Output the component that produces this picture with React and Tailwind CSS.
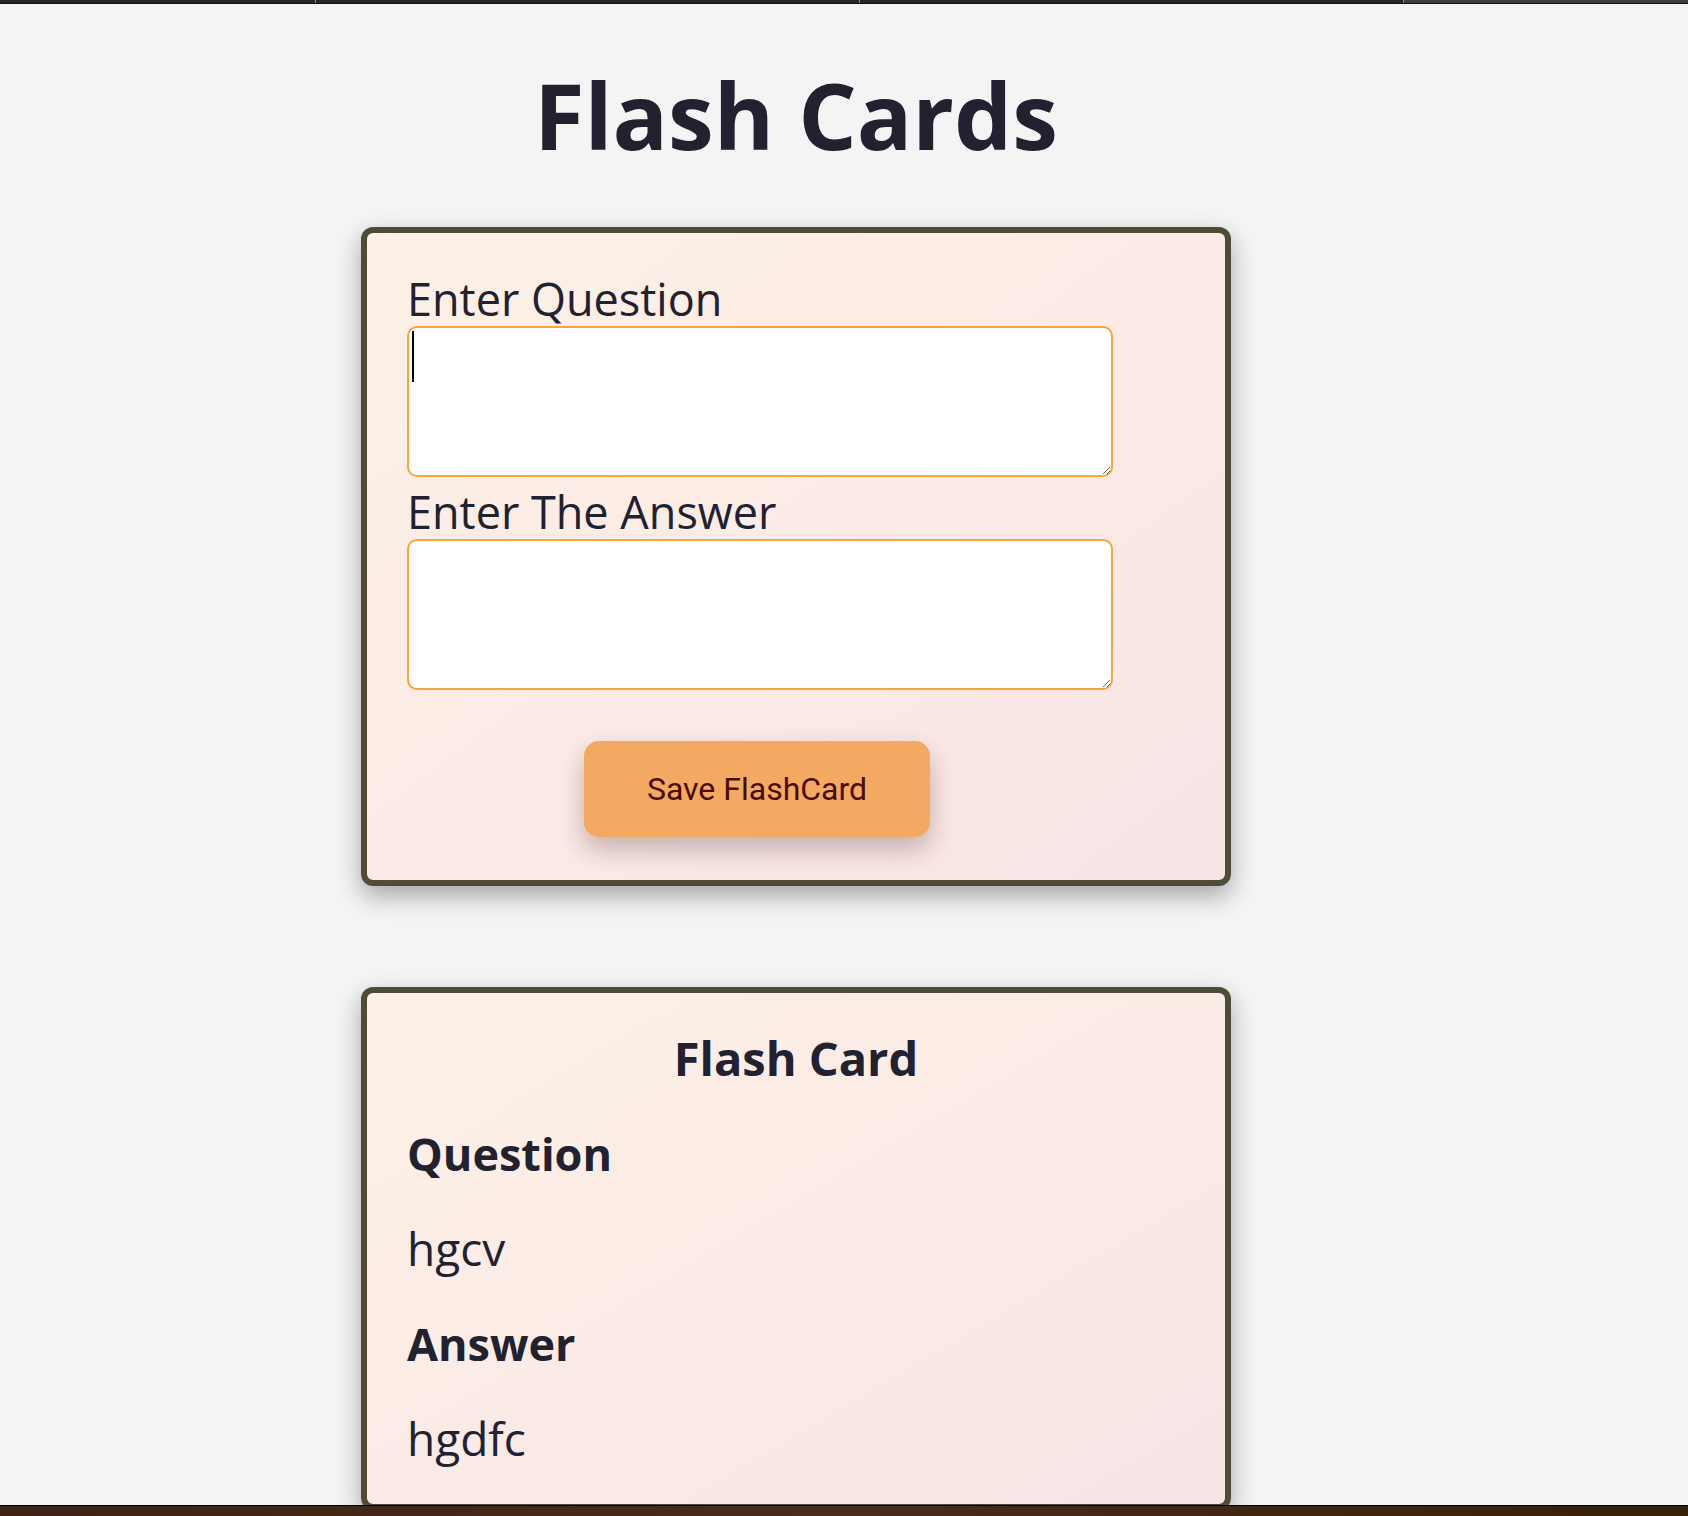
import { useState } from 'react';

const cardCls =
  'rounded-[12px] border-[6px] border-[#4e4c36] bg-gradient-to-br from-[#fcf1e6] via-[#fbebe6] to-[#f9e4e5] shadow-[0_10px_24px_rgba(0,0,0,0.32)]';

function TopBar() {
  return (
    <div className="flex h-[4px] shrink-0 border-b border-[#111]">
      <div className="w-[315px] bg-[#262626]" />
      <div className="w-px bg-[#8a8a8a]" />
      <div className="w-[543px] bg-[#262626]" />
      <div className="w-px bg-[#8a8a8a]" />
      <div className="w-[543px] bg-[#262626]" />
      <div className="w-px bg-[#8a8a8a]" />
      <div className="flex-1 bg-[#3d3d3d]" />
    </div>
  );
}

export default function App() {
  const [question, setQuestion] = useState('');
  const [answer, setAnswer] = useState('');

  return (
    <div className="flex h-[1516px] flex-col overflow-hidden bg-[#f4f4f4] font-['Open_Sans',sans-serif] text-[#21212f]">
      <TopBar />

      <main className="flex-1 overflow-hidden pl-[361px]">
        <div className="w-[870px]">
          <h1 className="mt-[65px] text-center text-[92px] font-bold leading-[92px]">Flash Cards</h1>

          <form className={`mt-[66px] px-[40px] pt-[39px] pb-[43px] ${cardCls}`} onSubmit={(e) => e.preventDefault()}>
            <label className="block text-[45px] leading-[54px]">Enter Question</label>
            <div className="relative w-[706px]">
              <textarea
                value={question}
                onChange={(e) => setQuestion(e.target.value)}
                className="block h-[151px] w-[706px] rounded-[10px] border-2 border-[#f5a53a] bg-white p-[3px] text-[37px] leading-[50px] outline-none"
              />
              {/* focused caret */}
              {question === '' && <span className="pointer-events-none absolute left-[5px] top-[5px] h-[51px] w-[2px] bg-black" />}
            </div>
            <label className="mt-[8px] block text-[45px] leading-[54px]">Enter The Answer</label>
            <textarea
              value={answer}
              onChange={(e) => setAnswer(e.target.value)}
              className="block h-[151px] w-[706px] rounded-[10px] border-2 border-[#f5a53a] bg-white p-[3px] text-[37px] leading-[50px] outline-none"
            />
            <button
              type="submit"
              className="mt-[51px] ml-[177px] flex h-[96px] w-[346px] items-center justify-center rounded-[15px] bg-[#f3a961] font-['Roboto',sans-serif] text-[32px] text-[#4a0c06] shadow-[0_12px_26px_rgba(60,20,20,0.28)]"
            >
              Save FlashCard
            </button>
          </form>

          <div className={`mt-[101px] px-[40px] pt-[18px] pb-[18px] ${cardCls}`}>
            <h2 className="text-center text-[47px] font-bold leading-[95px]">Flash Card</h2>
            <h3 className="text-[45px] font-bold leading-[95px]">Question</h3>
            <p className="text-[46px] leading-[95px]">hgcv</p>
            <h3 className="text-[45px] font-bold leading-[95px]">Answer</h3>
            <p className="text-[46px] leading-[95px]">hgdfc</p>
          </div>
        </div>
      </main>

      <div className="h-[11px] shrink-0 border-t border-black bg-gradient-to-r from-[#3a2417] via-[#4a2c1a] to-[#33200f]" />
    </div>
  );
}
